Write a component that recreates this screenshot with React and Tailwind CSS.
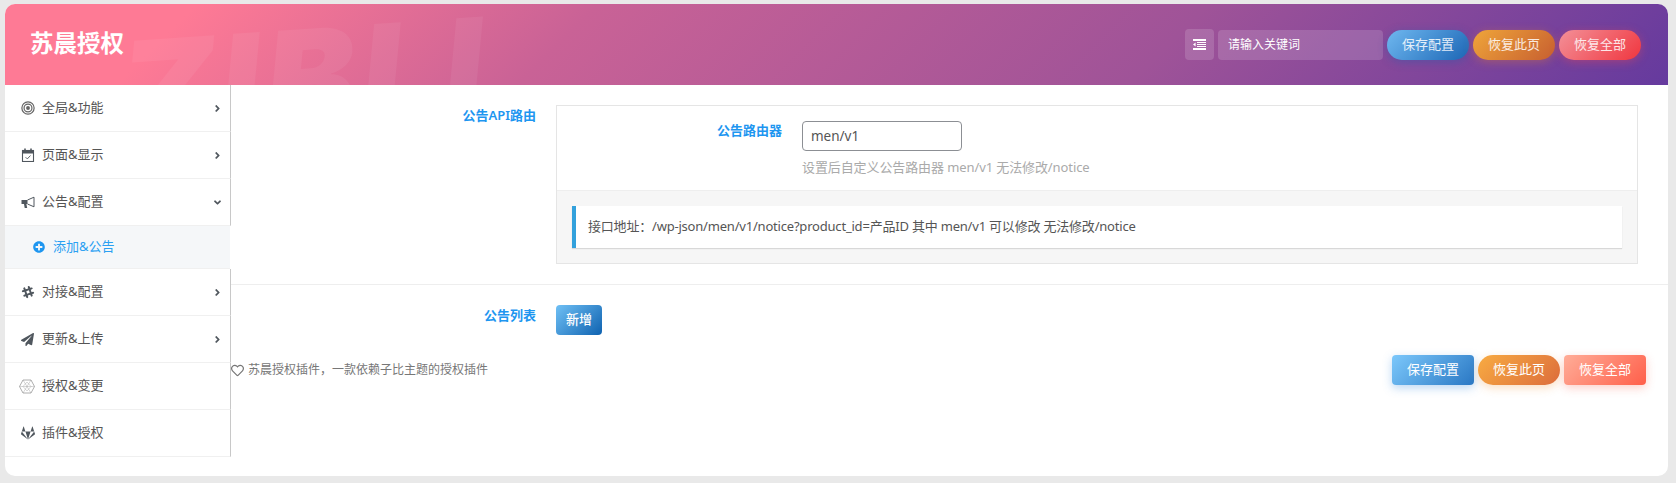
import { FaAngleDown, FaAngleRight, FaGitlab, FaPaperPlane, FaPlusCircle, FaRegHeart, FaSlackHash } from "react-icons/fa";

function Target() {
  return (
    <svg viewBox="0 0 16 16" className="h-[14px] w-[14px] text-[#666]" fill="none" stroke="currentColor">
      <circle cx="8" cy="8" r="7" strokeWidth="1.4" />
      <circle cx="8" cy="8" r="4.5" strokeWidth="1.4" />
      <circle cx="8" cy="8" r="2.2" fill="currentColor" stroke="none" />
    </svg>
  );
}

function Calendar() {
  return (
    <svg viewBox="0 0 14 14" className="h-[14px] w-[14px]" fill="none" stroke="currentColor">
      <rect x="1.5" y="2.5" width="11" height="11" strokeWidth="1.1" />
      <path d="M1.5 3h11v2.2h-11z" fill="currentColor" strokeWidth="0.5" />
      <path d="M4 .5v3M10 .5v3" strokeWidth="1.6" />
      <path d="M4.6 9.2l1.7 1.7 3.2-3.4" strokeWidth="0.9" />
    </svg>
  );
}

function Horn() {
  return (
    <svg viewBox="0 0 14 13" className="h-[13px] w-[14px]" fill="none" stroke="currentColor">
      <path d="M.5 4h6v4H5.4l.8 4H3.7L3 8H.5z" fill="currentColor" stroke="none" />
      <path d="M6.5 4 13 1.2v9.6L6.5 8" strokeWidth="1" />
    </svg>
  );
}

function Hex() {
  return (
    <svg viewBox="0 0 16 15" className="-ml-[2px] h-[15px] w-[16px] text-[#999]" fill="none" stroke="currentColor" strokeWidth="0.8">
      <path d="M4 1h8l3.5 6.5L12 14H4L.5 7.5z" />
      <path d="M4 1 12 14M12 1 4 14M.5 7.5h15M8 3l4 4.5L8 12 4 7.5z" strokeWidth="0.4" />
    </svg>
  );
}

function ListIcon() {
  return (
    <svg viewBox="0 0 13 11" className="h-[11px] w-[13px]" fill="currentColor">
      <path d="M0 0h13v2H0zM0 9h13v2H0zM4 3h9v1H4zM4 5h9v1H4zM4 7h9v1H4zM2.6 3.4v4.2L0 5.5z" />
    </svg>
  );
}

const menu = [
  { label: "全局&功能", icon: <Target />, arrow: "right" },
  { label: "页面&显示", icon: <Calendar />, arrow: "right" },
  { label: "公告&配置", icon: <Horn />, arrow: "down", open: true },
  { label: "对接&配置", icon: <FaSlackHash className="text-[14px]" />, arrow: "right" },
  { label: "更新&上传", icon: <FaPaperPlane className="text-[13px]" />, arrow: "right" },
  { label: "授权&变更", icon: <Hex /> },
  { label: "插件&授权", icon: <FaGitlab className="text-[14px]" /> },
];

function MenuRow({ item }) {
  return (
    <>
      <div className="flex h-[47px] items-center border-b border-r border-b-[#f0f0f0] border-r-[#c8c8c8] pl-4 pr-[7px] text-[13px] text-[#555]">
        <span className="flex w-[21px] shrink-0 items-center justify-start text-[#50575e]">{item.icon}</span>
        <span className="flex-1">{item.label}</span>
        {item.arrow === "right" && <FaAngleRight className="text-[11px] text-[#50575e]" />}
        {item.arrow === "down" && <FaAngleDown className="text-[11px] text-[#50575e]" />}
      </div>
      {item.open && (
        <div className="mr-[1px] flex h-[43px] items-center border-b border-[#f0f0f0] bg-[#f5f7f9] pl-[28px] text-[13px] text-[#2ba0f2]">
          <FaPlusCircle className="mr-[8px] text-[12px] text-[#1e96f0]" />
          添加&amp;公告
        </div>
      )}
    </>
  );
}

function GradButton({ className, children }) {
  return (
    <button className={"h-[30px] w-[82px] text-[13px] " + className}>{children}</button>
  );
}

export default function App() {
  return (
    <div className="min-h-screen bg-[#e9e9e9] pb-[7px] pl-[5px] pr-2 pt-1 font-['Noto_Sans','Noto_Sans_CJK_SC',sans-serif]">
      <div className="flex h-[472px] flex-col overflow-hidden rounded-[10px] bg-white">
        <header className="relative flex h-[81px] shrink-0 items-center justify-between overflow-hidden bg-[linear-gradient(135deg,#fe7a95_11%,#c96296_34%,#9f5398_69%,#653a9e_100%)] pl-[25px] pr-[27px]">
          <div className="absolute left-[115px] top-[6px] -rotate-[4deg] font-['Inter',sans-serif] text-[135px] font-black italic leading-none tracking-[6px] text-white/[0.06]">
            ZIBLL
          </div>
          <h1 className="relative -mt-[2px] text-[23.5px] font-bold text-white">苏晨授权</h1>
          <div className="relative flex items-center gap-1">
            <span className="flex h-[31px] w-[29px] items-center justify-center rounded-[4px] bg-white/15 text-white">
              <ListIcon />
            </span>
            <input
              placeholder="请输入关键词"
              className="h-[30px] w-[165px] rounded-[4px] bg-white/15 pl-[10px] text-[12px] text-white placeholder:text-white"
            />
            <GradButton className="rounded-full bg-[linear-gradient(135deg,#6fb8f0,#1c66b5)] text-white/85 shadow-[0_2px_10px_rgba(40,90,170,0.45)]">保存配置</GradButton>
            <GradButton className="rounded-full bg-[linear-gradient(135deg,#efa53a,#c75f30)] text-white/85 shadow-[0_2px_10px_rgba(220,120,50,0.4)]">恢复此页</GradButton>
            <GradButton className="rounded-full bg-[linear-gradient(135deg,#f39098,#f0363f)] text-white/85 shadow-[0_2px_10px_rgba(240,70,80,0.4)]">恢复全部</GradButton>
          </div>
        </header>

        <div className="flex flex-1">
          <aside className="w-[226px] shrink-0">
            {menu.map((item) => (
              <MenuRow key={item.label} item={item} />
            ))}
          </aside>

          <main className="min-w-0 flex-1">
            <section className="flex border-b border-[#eeeeee] pb-5 pr-[30px] pt-5">
              <div className="w-[305px] shrink-0 pt-[1px] text-right text-[13px] font-semibold text-[#1e96f0]">公告API路由</div>
              <div className="ml-5 h-[159px] flex-1 border border-[#e5e5e5]">
                <div className="flex h-[84px] pt-[15px]">
                  <div className="w-[225px] shrink-0 text-right text-[13px] font-semibold text-[#1e96f0]">公告路由器</div>
                  <div className="ml-5">
                    <input
                      readOnly
                      value="men/v1"
                      className="h-[30px] w-[160px] rounded-[4px] border border-[#8c8f94] px-2 text-[13.5px] text-[#555]"
                    />
                    <p className="mt-[6px] text-[13px] leading-[20px] tracking-[-0.1px] text-[#aaaaaa]">设置后自定义公告路由器 men/v1 无法修改/notice</p>
                  </div>
                </div>
                <div className="h-[73px] border-t border-[#eeeeee] bg-[#f6f6f6] p-[15px]">
                  <div className="flex h-[42px] items-center border-l-4 border-[#33a1dc] bg-white pl-3 text-[13px] tracking-[-0.2px] text-[#555] shadow-[0_1px_1px_rgba(0,0,0,0.12)]">
                    接口地址：/wp-json/men/v1/notice?product_id=产品ID 其中 men/v1 可以修改 无法修改/notice
                  </div>
                </div>
              </div>
            </section>

            <section className="flex pt-5">
              <div className="w-[305px] shrink-0 pt-[1px] text-right text-[13px] font-semibold text-[#1e96f0]">公告列表</div>
              <button className="ml-5 h-[30px] w-[46px] rounded-[4px] bg-[linear-gradient(135deg,#6fc0f5,#0f62b0)] text-[13px] font-medium text-white">新增</button>
            </section>

            <footer className="mt-5 flex items-center justify-between pr-[22px]">
              <div className="flex items-center gap-[4px] text-[12px] text-[#777]">
                <FaRegHeart className="text-[13px]" />
                苏晨授权插件，一款依赖子比主题的授权插件
              </div>
              <div className="flex gap-1">
                <GradButton className="rounded-[4px] bg-[linear-gradient(135deg,#7cc8fb,#2a78c4)] text-white shadow-[0_3px_10px_rgba(60,140,220,0.35)]">保存配置</GradButton>
                <GradButton className="rounded-full bg-[linear-gradient(135deg,#f8ab42,#dc6d3c)] text-white shadow-[0_3px_10px_rgba(240,150,60,0.3)]">恢复此页</GradButton>
                <GradButton className="rounded-[4px] bg-[linear-gradient(135deg,#ffad98,#ff5f4a)] text-white shadow-[0_3px_10px_rgba(250,100,80,0.3)]">恢复全部</GradButton>
              </div>
            </footer>
          </main>
        </div>
      </div>
    </div>
  );
}
